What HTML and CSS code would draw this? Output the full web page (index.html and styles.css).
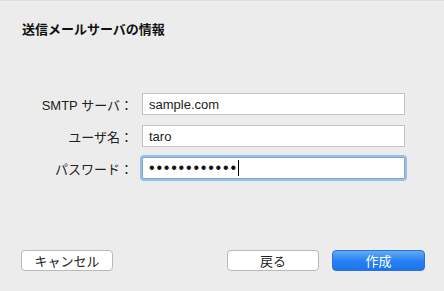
FILE: index.html
```html
<!DOCTYPE html>
<html>
<head>
    <title>送信メールサーバの情報</title>
    <link rel="stylesheet" href="styles.css">
</head>
<body>
    <div class="dialog">
        <h1 class="title">送信メールサーバの情報</h1>
        <div class="form">
            <label class="label" for="server">SMTP サーバ：</label>
            <input type="text" id="server" class="field" value="sample.com">
            <label class="label" for="user">ユーザ名：</label>
            <input type="text" id="user" class="field" value="taro">
            <label class="label" for="pass">パスワード：</label>
            <span class="field-wrap">
                <input type="password" id="pass" class="field focused" value="123456789012">
                <span class="caret"></span>
            </span>
        </div>
        <div class="buttons">
            <button class="btn">キャンセル</button>
            <span class="spacer"></span>
            <button class="btn">戻る</button>
            <button class="btn primary">作成</button>
        </div>
    </div>
</body>
</html>
```

FILE: styles.css
```css
html, body { margin: 0; padding: 0; }
body { background: #ececec; font-family: "Liberation Sans", "Noto Sans CJK JP", sans-serif; color: #222; }
.dialog { height: 291px; box-sizing: border-box; padding: 20px 19px 20px 21px; display: flex; flex-direction: column; border-top: 1px solid #dedede; }
.title { margin: 0 0 0 1px; font-size: 13px; line-height: 17px; font-weight: bold; color: #111; }
.form { margin-top: 55px; display: grid; grid-template-columns: 112px 263px; column-gap: 9px; row-gap: 10px; align-items: center; }
.label { text-align: right; font-size: 13px; color: #222; }
.field { box-sizing: border-box; height: 22px; width: 263px; margin: 0; padding: 0 6px; border: 1px solid #c3c3c3; background: #fff; font-family: inherit; font-size: 13px; color: #222; outline: none; display: block; }
.field-wrap { position: relative; display: block; height: 22px; }
.field.focused { border-color: #7fa8d4; box-shadow: 0 0 0 2px #9cbde0; border-radius: 2px; font-size: 16px; letter-spacing: 1.8px; color: #111; }
.caret { position: absolute; left: 96px; top: 3px; width: 1px; height: 16px; background: #000; }
.buttons { margin-top: auto; display: flex; align-items: center; }
.spacer { flex: 1; }
.btn { box-sizing: border-box; width: 92px; height: 21px; padding: 0; border: 1px solid #b9b9b9; border-radius: 4px; background: #fff; font-family: inherit; font-size: 13px; color: #222; }
.primary { width: 93px; margin-left: 13px; border-color: #2f6fd8; background: linear-gradient(#62aaf8, #2a83f2 50%, #1b74ea); color: #fff; }
```
